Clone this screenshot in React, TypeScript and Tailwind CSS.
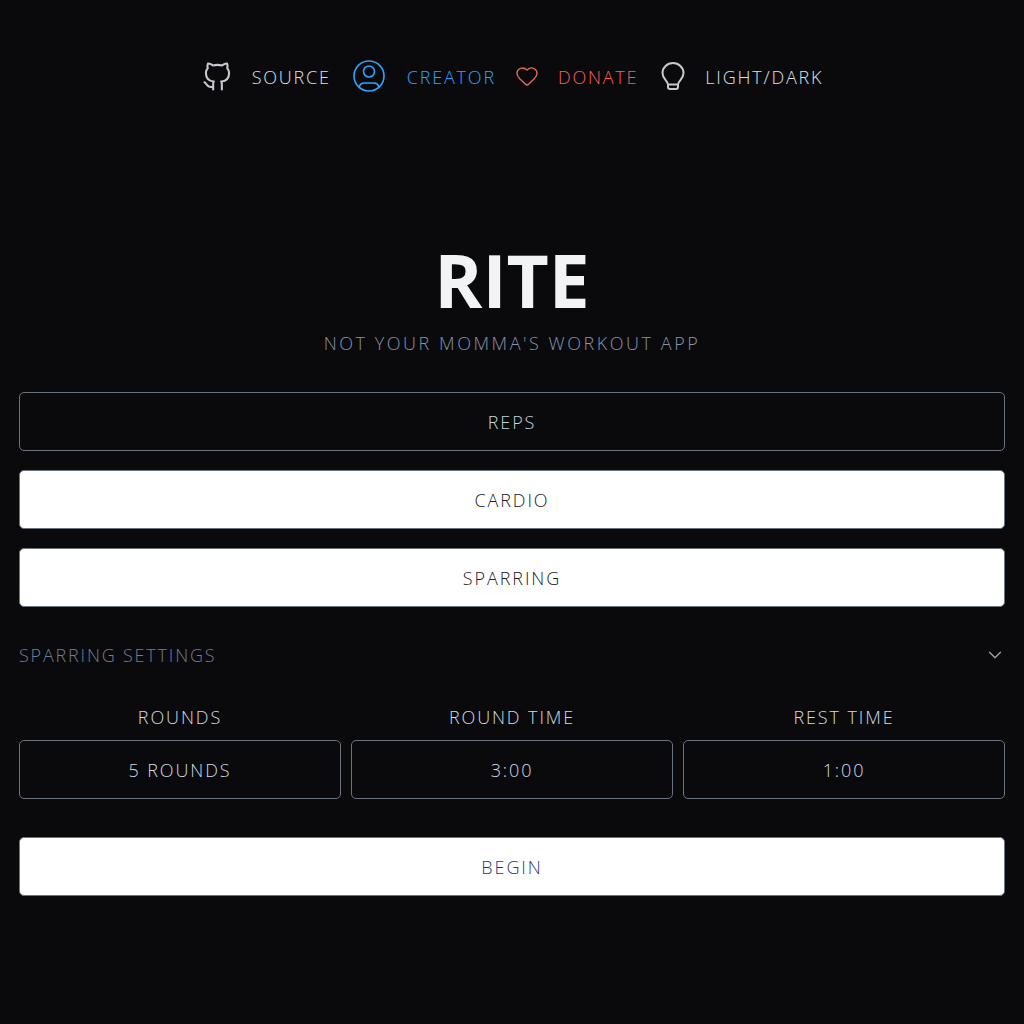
import { ChevronDown, Heart } from "lucide-react"

const font = "font-['Open_Sans','Liberation_Sans',sans-serif]"

function GithubIcon() {
  return (
    <svg viewBox="2 2 20 20" className="h-[29px] w-[29px] text-[#c5c8ce]" fill="none" stroke="currentColor" strokeWidth={1.45} strokeLinecap="round" strokeLinejoin="round">
      <path d="M9 19c-4.3 1.4 -4.3 -2.5 -6 -3m12 5v-3.5c0 -1 .1 -1.4 -.5 -2c2.8 -.3 5.5 -1.4 5.5 -6a4.6 4.6 0 0 0 -1.3 -3.2a4.2 4.2 0 0 0 -.1 -3.2s-1.1 -.3 -3.5 1.3a12.3 12.3 0 0 0 -6.2 0c-2.4 -1.6 -3.5 -1.3 -3.5 -1.3a4.2 4.2 0 0 0 -.1 3.2a4.6 4.6 0 0 0 -1.3 3.2c0 4.6 2.7 5.7 5.5 6c-.6 .6 -.6 1.2 -.5 2v3.5" />
    </svg>
  )
}

function UserIcon() {
  return (
    <svg viewBox="0 0 32 32" className="h-[32px] w-[32px]" fill="none" stroke="currentColor" strokeWidth={1.6}>
      <circle cx="16" cy="16" r="15" />
      <circle cx="16" cy="11.5" r="5.5" />
      <path d="M6 27.5c.5 -2.8 2.6 -4.500 5.500 -4.500h9c2.900 0 5 1.700 5.500 4.500" />
    </svg>
  )
}

function BulbIcon() {
  return (
    <svg viewBox="0 0 24 28" className="h-[28px] w-[24px] text-[#c5c8ce]" fill="none" stroke="currentColor" strokeWidth={2} strokeLinejoin="round">
      <path d="M7 22.500C6.500 18.500 1.500 17 1.500 11a10.500 10 0 0 1 21 0c0 6 -5 7.500 -5.500 11.500Z" />
      <path d="M7 22.500v2.500a2 2 0 0 0 2 2h6a2 2 0 0 0 2 -2v-2.500" />
    </svg>
  )
}

function NavLink({ icon, label, color, className }: { icon: React.ReactNode; label: string; color: string; className: string }) {
  return (
    <a className={`flex items-center ${className} ${color}`}>
      {icon}
      <span className="pt-[1px] text-[18px] font-light leading-none tracking-[1.8px]">{label}</span>
    </a>
  )
}

function Field({ label, value }: { label: string; value: string }) {
  return (
    <div className="flex flex-1 flex-col items-center">
      <label className="mb-[13px] h-[20px] text-[18px] font-light leading-[20px] tracking-[1.9px] text-[#d3dae2]">{label}</label>
      <div className="flex h-[59px] w-full items-center justify-center rounded-[5px] border border-[#6b7280] pt-[2px] text-[18px] font-light tracking-[1.9px] text-[#d3dae2]">
        {value}
      </div>
    </div>
  )
}

function Choice({ label, active, color }: { label: string; active?: boolean; color?: string }) {
  return (
    <button
      className={`flex h-[59px] w-full items-center justify-center rounded-[5px] border border-[#6b7280] pt-[2px] text-[18px] font-light tracking-[1.9px] ${
        active ? "text-[#c8d5de]" : `bg-white ${color ?? "text-[#1c2026]"}`
      }`}
    >
      {label}
    </button>
  )
}

export default function App() {
  return (
    <div className={`${font} min-h-[1024px] bg-[#0a0a0d] px-[19px]`}>
      <nav className="flex items-center justify-center gap-[22px] pl-[2px] pt-[60px]">
        <NavLink icon={<GithubIcon />} className="gap-[20px]" label="SOURCE" color="text-[#dde0e5]" />
        <NavLink icon={<UserIcon />} className="gap-[22px]" label="CREATOR" color="text-[#2aa5ff]" />
        <NavLink icon={<Heart className="h-[24px] w-[24px] text-[#e2685c]" strokeWidth={1.4} />} className="-ml-[3px] gap-[19px]" label="DONATE" color="text-[#ff5a5a]" />
        <NavLink icon={<BulbIcon />} className="ml-[1px] gap-[20px]" label="LIGHT/DARK" color="text-[#dde0e5]" />
      </nav>

      <header className="mt-[148px] text-center">
        <h1 className="text-[73px] font-bold leading-[80px] text-[#f1f3f5]">RITE</h1>
        <p className="mt-[11px] text-[18px] font-light leading-[24px] tracking-[2.55px] text-[#8594ac]">NOT YOUR MOMMA'S WORKOUT APP</p>
      </header>

      <div className="mt-[37px] flex flex-col gap-[19px]">
        <Choice label="REPS" active />
        <Choice label="CARDIO" />
        <Choice label="SPARRING" />
      </div>

      <div className="mt-[36px] flex items-center justify-between">
        <span className="text-[18px] font-light leading-[24px] tracking-[1.8px] text-[#6f7f98]">SPARRING SETTINGS</span>
        <ChevronDown className="-mr-[1px] h-[22px] w-[22px] text-[#9aa1ac]" strokeWidth={1.5} />
      </div>

      <div className="mt-[40px] flex gap-[10px]">
        <Field label="ROUNDS" value="5 ROUNDS" />
        <Field label="ROUND TIME" value="3:00" />
        <Field label="REST TIME" value="1:00" />
      </div>

      <div className="mt-[38px]">
        <Choice label="BEGIN" color="text-[#2a3570]" />
      </div>
    </div>
  )
}
